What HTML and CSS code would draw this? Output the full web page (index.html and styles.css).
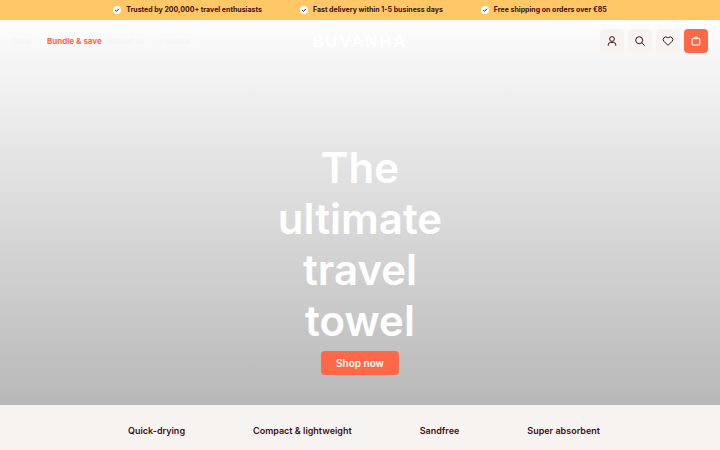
FILE: index.html
```html
<!DOCTYPE html>
<html lang="en">
<head>
  <meta charset="UTF-8">
  <meta name="viewport" content="width=device-width, initial-scale=1.0">
  <title>Buvanha</title>
  <link rel="stylesheet" href="styles.css">
</head>
<body>
  <ul class="usp-bar">
    <li>
      <svg class="check" viewBox="0 0 8 8"><circle cx="4" cy="4" r="4"/><path d="M2.2 4.1l1.3 1.3 2.4-2.6"/></svg>
      Trusted by 200,000+ travel enthusiasts
    </li>
    <li>
      <svg class="check" viewBox="0 0 8 8"><circle cx="4" cy="4" r="4"/><path d="M2.2 4.1l1.3 1.3 2.4-2.6"/></svg>
      Fast delivery within 1-5 business days
    </li>
    <li>
      <svg class="check" viewBox="0 0 8 8"><circle cx="4" cy="4" r="4"/><path d="M2.2 4.1l1.3 1.3 2.4-2.6"/></svg>
      Free shipping on orders over €85
    </li>
  </ul>

  <div class="hero">
    <header class="header">
      <nav class="nav">
        <a href="#">Shop <svg class="arrow" viewBox="0 0 6 6"><path d="M1 2l2 2 2-2"/></svg></a>
        <a href="#" class="highlight">Bundle &amp; save</a>
        <a href="#">About us <svg class="arrow" viewBox="0 0 6 6"><path d="M1 2l2 2 2-2"/></svg></a>
        <a href="#">Contact <svg class="arrow" viewBox="0 0 6 6"><path d="M1 2l2 2 2-2"/></svg></a>
      </nav>
      <a href="#" class="logo">BUVANHA</a>
      <div class="actions">
        <button class="language">English</button>
        <button class="icon-button" aria-label="Account">
          <svg viewBox="0 0 12 12"><circle cx="6" cy="4" r="2.4"/><path d="M2.2 10.8V9.9a2.5 2.5 0 0 1 2.5-2.5h2.6a2.5 2.5 0 0 1 2.5 2.5v.9"/></svg>
        </button>
        <button class="icon-button" aria-label="Search">
          <svg viewBox="0 0 12 12"><circle cx="5.2" cy="5.2" r="3.5"/><path d="M7.8 7.8l2.9 2.9"/></svg>
        </button>
        <button class="icon-button" aria-label="Wishlist">
          <svg viewBox="0 0 12 12"><path d="M6 10.4L2 6.4a2.6 2.6 0 0 1 0-3.7 2.6 2.6 0 0 1 3.7 0l.3.4.3-.4a2.6 2.6 0 0 1 3.7 0 2.6 2.6 0 0 1 0 3.7z"/></svg>
        </button>
        <button class="icon-button cart" aria-label="Cart">
          <svg viewBox="0 0 12 12"><path d="M2.2 3.6h7.6v5.6a.8.8 0 0 1-.8.8H3a.8.8 0 0 1-.8-.8zM4.3 3.6a1.7 1.7 0 0 1 3.4 0"/></svg>
        </button>
      </div>
    </header>

    <div class="hero-content">
      <h1>The ultimate travel towel</h1>
      <a href="#" class="shop-button">Shop now</a>
    </div>
  </div>

  <ul class="features">
    <li>Quick-drying</li>
    <li>Compact &amp; lightweight</li>
    <li>Sandfree</li>
    <li>Super absorbent</li>
  </ul>
</body>
</html>
```

FILE: styles.css
```css
* {
  box-sizing: border-box;
}

body {
  margin: 0;
  min-height: 100vh;
  display: flex;
  flex-direction: column;
  background: #f7f3f0;
  color: #400f14;
  font-family: Inter, 'Liberation Sans', sans-serif;
  font-weight: 600;
}

ul {
  margin: 0;
  padding: 0;
  list-style: none;
}

a {
  color: inherit;
  text-decoration: none;
}

button {
  padding: 0;
  border: none;
  background: none;
  color: inherit;
  font: inherit;
}

svg {
  fill: none;
  stroke: currentColor;
}

.usp-bar {
  display: flex;
  justify-content: center;
  gap: 38px;
  background: #ffc765;
  font-size: 7px;
  font-weight: 700;
  line-height: 20px;
}

.usp-bar li {
  display: flex;
  align-items: center;
  gap: 5px;
}

.check {
  width: 8px;
  height: 8px;
}

.check circle {
  fill: white;
  stroke: none;
}

.hero {
  flex: 1;
  display: flex;
  flex-direction: column;
  background: linear-gradient(#fdfdfd, #b8b8b8);
  color: white;
}

.header {
  display: grid;
  grid-template-columns: 1fr auto 1fr;
  align-items: center;
  padding: 9px 12px;
}

.nav {
  display: flex;
  gap: 8px;
  color: #f5f5f5;
  font-size: 8px;
}

.nav .highlight {
  color: #ff6847;
  font-weight: 700;
}

.arrow {
  width: 5px;
  height: 5px;
}

.logo {
  font-size: 16px;
  font-weight: 600;
  line-height: 20px;
  letter-spacing: 2px;
}

.actions {
  display: flex;
  justify-content: flex-end;
  align-items: center;
  gap: 4px;
}

.language {
  margin-right: 6px;
  color: #fafafa;
  font-size: 8px;
}

.icon-button {
  width: 24px;
  height: 24px;
  display: flex;
  justify-content: center;
  align-items: center;
  border-radius: 4px;
  background: #f7f3f0;
  color: #400f14;
}

.icon-button svg {
  width: 12px;
  height: 12px;
}

.icon-button.cart {
  background: #ff6847;
  color: white;
}

.hero-content {
  flex: 1;
  display: flex;
  flex-direction: column;
  justify-content: flex-end;
  align-items: center;
  padding-bottom: 30px;
}

h1 {
  max-width: 200px;
  margin: 0 0 5px;
  font-size: 42px;
  font-weight: 600;
  line-height: 51px;
  text-align: center;
}

.shop-button {
  padding: 0 15px;
  border-radius: 4px;
  background: #ff6847;
  font-size: 10px;
  line-height: 24px;
}

.features {
  display: flex;
  justify-content: center;
  gap: 68px;
  padding: 16px 12px 9px 20px;
  font-size: 9px;
  line-height: 20px;
}
```
